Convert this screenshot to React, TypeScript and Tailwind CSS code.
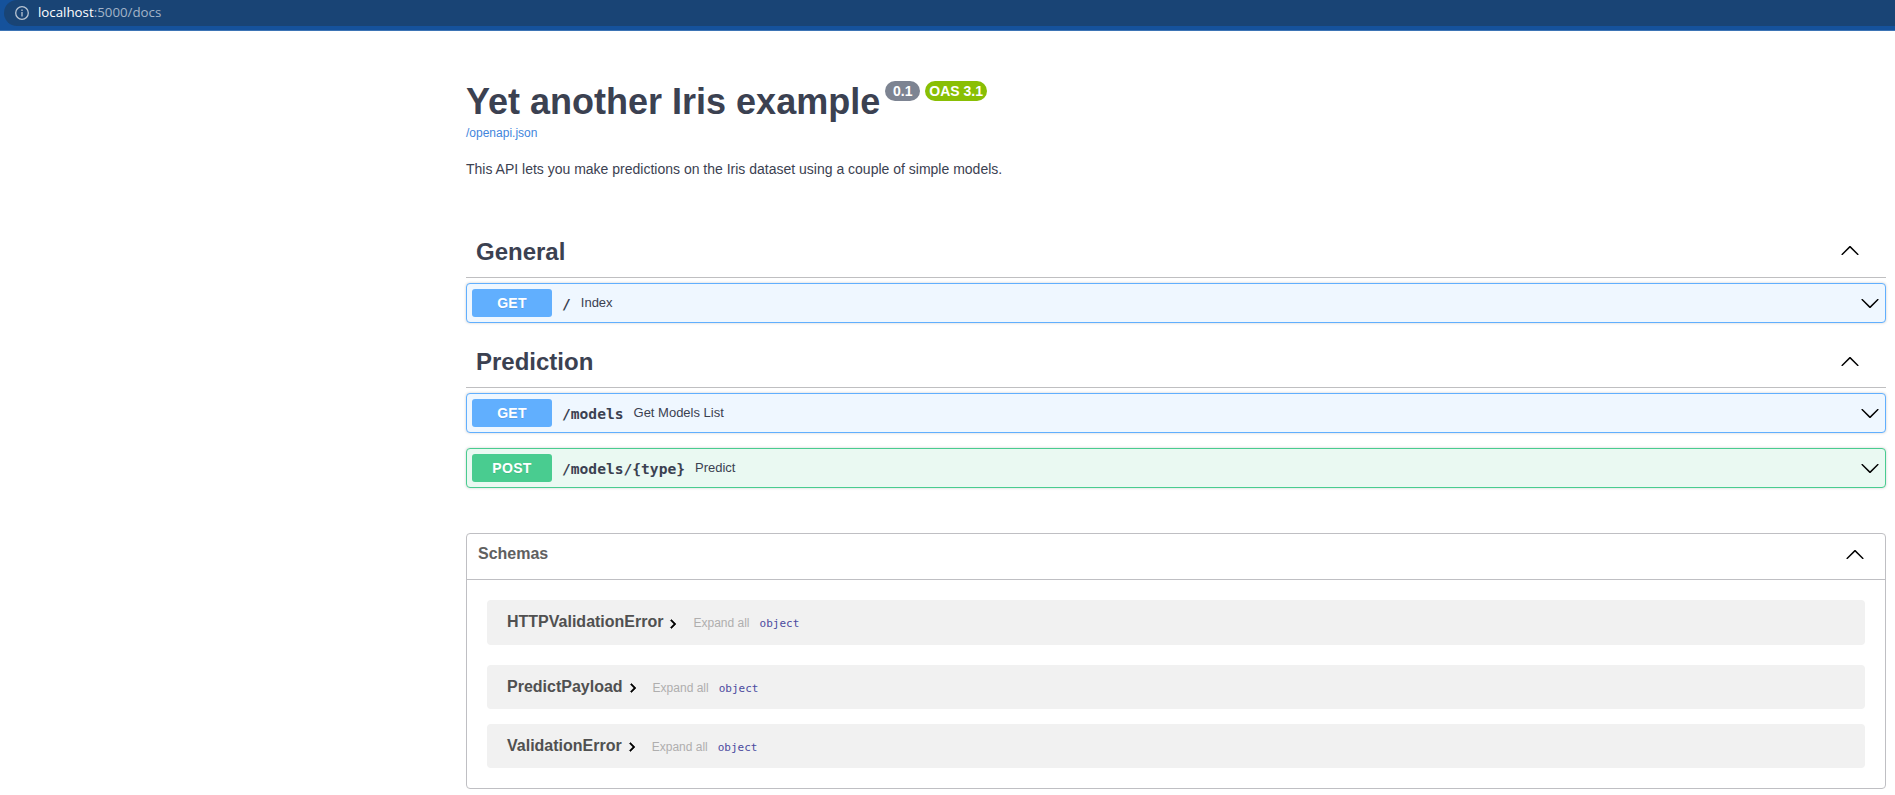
import React from "react";

const ARROW_UP =
  "M17.418 14.908c.272.268.709.268.979 0s.271-.701 0-.969l-7.908-7.83c-.27-.268-.707-.268-.979 0l-7.908 7.83c-.27.268-.27.701 0 .969.271.268.709.268.979 0L10 7.767l7.418 7.141z";

function Arrow({ down = false, className = "" }: { down?: boolean; className?: string }) {
  return (
    <svg viewBox="0 0 20 20" className={`size-5 shrink-0 ${down ? "rotate-180" : ""} ${className}`}>
      <path d={ARROW_UP} fill="#000" />
    </svg>
  );
}

function SectionHeader({ title, arrow }: { title: string; arrow: string }) {
  return (
    <h3 className="flex h-[60px] items-start justify-between pl-[10px] pr-[26px] text-2xl font-bold">
      <span className="pt-[18px]">{title}</span>
      <Arrow className={arrow} />
    </h3>
  );
}

function Operation({ method, path, summary }: { method: "GET" | "POST"; path: string; summary: string }) {
  const get = method === "GET";
  return (
    <div
      className={`flex h-10 items-center rounded border pl-[5px] pr-[5px] shadow-[0_0_3px_rgba(0,0,0,0.19)] ${
        get ? "border-[#61affe] bg-[#eff7ff]" : "border-[#49cc90] bg-[#eaf9f2]"
      }`}
    >
      <span
        className={`flex h-7 w-20 items-center justify-center rounded-[3px] text-sm font-bold tracking-[0.3px] text-white [text-shadow:0_1px_0_rgba(0,0,0,0.1)] ${
          get ? "bg-[#61affe]" : "bg-[#49cc90]"
        }`}
      >
        {method}
      </span>
      <span className="ml-[10px] pt-px font-['DejaVu_Sans_Mono',monospace] text-[14.6px] font-bold">{path}</span>
      <span className="ml-[10px] text-[13px]">{summary}</span>
      <Arrow down className="ml-auto mt-px" />
    </div>
  );
}

function Model({ name, className, arrow }: { name: string; className: string; arrow: string }) {
  return (
    <div className={`flex rounded bg-[#f1f1f1] pl-5 pt-[10px] ${className}`}>
      <div className="flex h-6 items-center">
        <span className="text-base font-bold text-[#505050]">{name}</span>
        <svg viewBox="0 0 24 24" className={`ml-px size-[18px] ${arrow}`}>
          <path d="M10 6 8.59 7.41 13.17 12l-4.58 4.59L10 18l6-6z" fill="#000" stroke="#000" strokeWidth="0.7" />
        </svg>
        <span className="ml-[11px] pt-[2px] text-xs text-[#afaeae]">Expand all</span>
        <span className="ml-[10px] pt-1 font-['DejaVu_Sans_Mono',monospace] text-[11px] text-[#4b4a9f]">object</span>
      </div>
    </div>
  );
}

export default function App() {
  return (
    <div className="h-[795px] overflow-hidden bg-white font-['Liberation_Sans',Arial,sans-serif] text-[#3b4151]">
      <header className="h-[31px] border-b border-[#3d74b5] bg-[#15529c] pl-1">
        <div className="flex h-[26px] items-center rounded-bl-[13px] rounded-tl-[13px] bg-[#194475] pl-[11px] font-['Open_Sans','Noto_Sans',sans-serif] text-[13.3px] text-[#a3b4c8]">
          <svg viewBox="0 0 14 14" className="mb-px mr-[9px] size-[14px]" fill="none" stroke="#b9c5d3" strokeWidth="1.3">
            <circle cx="7" cy="7" r="6.3" />
            <path d="M7 6v4.5M7 3.5v1.4" />
          </svg>
          <span className="pb-px">
            <span className="text-white">localhost</span>:5000/docs
          </span>
        </div>
      </header>

      <main className="ml-[466px] w-[1420px]">
        <section className="h-[187px] pt-[50px]">
          <div className="flex h-[42px] items-start">
            <h1 className="text-[36px] font-bold leading-[41px]">Yet another Iris example</h1>
            <span className="ml-[5px] flex h-5 w-[35px] items-center justify-center rounded-full bg-[#7d8492] text-sm font-bold text-white">
              0.1
            </span>
            <span className="ml-[5px] flex h-5 w-[62px] items-center justify-center whitespace-nowrap rounded-full bg-[#89bf04] text-sm font-bold text-white">
              OAS 3.1
            </span>
          </div>
          <a className="block pt-[3px] text-xs leading-[14px] text-[#4285dc]">/openapi.json</a>
          <p className="pt-[21px] text-sm leading-4">This API lets you make predictions on the Iris dataset using a couple of simple models.</p>
        </section>

        <section>
          <div className="border-b border-[#bfbfc1]">
            <div className="-mb-px">
              <SectionHeader title="General" arrow="mt-[22px]" />
            </div>
          </div>
          <div className="pt-[5px]">
            <Operation method="GET" path="/" summary="Index" />
          </div>
        </section>

        <section className="pt-[5px]">
          <div className="border-b border-[#bfbfc1]">
            <div className="-mb-px">
              <SectionHeader title="Prediction" arrow="mt-[23px]" />
            </div>
          </div>
          <div className="flex flex-col gap-[15px] pt-[5px]">
            <Operation method="GET" path="/models" summary="Get Models List" />
            <Operation method="POST" path="/models/{type}" summary="Predict" />
          </div>
        </section>

        <section className="mt-[45px] h-64 rounded border border-[#bfbfc3]">
          <h4 className="flex h-[46px] justify-between border-b border-[#bfbfc3] pl-[11px] pr-5 pt-[10px] text-base font-bold leading-5 text-[#606060]">
            <span>Schemas</span>
            <Arrow />
          </h4>
          <div className="px-5 pt-5">
            <Model name="HTTPValidationError" className="h-[45px]" arrow="mt-1" />
            <Model name="PredictPayload" className="mt-5 h-11" arrow="mt-[2px]" />
            <Model name="ValidationError" className="mt-[15px] h-11" arrow="mt-[2px]" />
          </div>
        </section>
      </main>
    </div>
  );
}
